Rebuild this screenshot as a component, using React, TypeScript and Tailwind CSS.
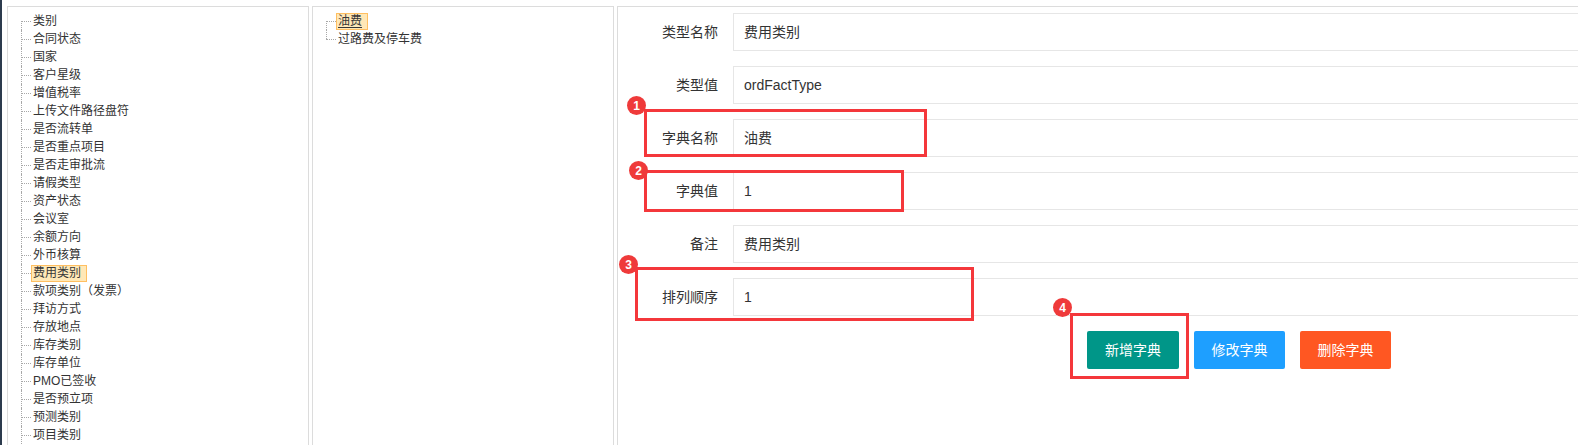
import React from 'react';

const typeList = [
  '类别', '合同状态', '国家', '客户星级', '增值税率', '上传文件路径盘符', '是否流转单', '是否重点项目',
  '是否走审批流', '请假类型', '资产状态', '会议室', '余额方向', '外币核算', '费用类别', '款项类别（发票）',
  '拜访方式', '存放地点', '库存类别', '库存单位', 'PMO已签收', '是否预立项', '预测类别', '项目类别',
];

const dictList = ['油费', '过路费及停车费'];

const fields = [
  { label: '类型名称', value: '费用类别' },
  { label: '类型值', value: 'ordFactType' },
  { label: '字典名称', value: '油费' },
  { label: '字典值', value: '1' },
  { label: '备注', value: '费用类别' },
  { label: '排列顺序', value: '1' },
];

const font = { fontFamily: '"Liberation Sans", "Noto Sans CJK SC", sans-serif' };

function TreeRow({ text, first, last, selected, underline }: { text: string; first: boolean; last: boolean; selected: boolean; underline?: boolean }) {
  return (
    <li className="relative flex h-[18px] items-center pl-[13px]">
      <span
        className={
          'absolute left-[13px] w-0 border-l border-dotted border-[#a8a8a8] ' +
          (first ? 'top-[9px] ' : 'top-0 ') +
          (last ? 'h-[9px]' : 'bottom-0')
        }
      />
      <span className="w-[10px] border-t border-dotted border-[#a8a8a8]" />
      <span
        className={
          'flex h-[17px] items-center border pl-[1px] pr-[5px] whitespace-nowrap leading-[17px] ' +
          (selected ? 'border-[#FFB951] bg-[#FFE6B0] opacity-90 text-[#222]' : 'border-transparent text-[#333]') +
          (underline ? ' underline underline-offset-2' : '')
        }
      >
        {text}
      </span>
    </li>
  );
}

function Badge({ n, className }: { n: number; className: string }) {
  return (
    <div className={'absolute flex h-[19px] w-[19px] items-center justify-center rounded-full bg-[#ef3a3a] text-[12px] font-bold text-white ' + className}>
      {n}
    </div>
  );
}

export default function App() {
  return (
    <div className="relative flex h-[445px] w-[1578px] overflow-hidden bg-white text-[12px]" style={font}>
      <div className="h-full w-[2px] shrink-0 bg-[#2c3b4d]" />

      <div className="ml-[5px] flex pt-[6px]">
        <div className="h-[460px] w-[302px] shrink-0 border border-[#dcdcdc]">
          <ul className="pt-[5px]">
            {typeList.map((t, i) => (
              <TreeRow key={t} text={t} first={i === 0} last={false} selected={t === '费用类别'} />
            ))}
          </ul>
        </div>

        <div className="ml-[3px] h-[460px] w-[302px] shrink-0 border border-[#dcdcdc]">
          <ul className="pt-[5px]">
            {dictList.map((t, i) => (
              <TreeRow key={t} text={t} first={i === 0} last={i === dictList.length - 1} selected={i === 0} underline={i === 0} />
            ))}
          </ul>
        </div>

        <div className="ml-[3px] h-[460px] w-[1100px] shrink-0 border border-[#dcdcdc] pl-[5px] pt-[6px] text-[14px] text-[#333]">
          {fields.map((f) => (
            <div key={f.label} className="mb-[15px] flex h-[38px]">
              <label className="w-[110px] shrink-0 pr-[15px] text-right leading-[38px]">{f.label}</label>
              <div className="flex flex-1 items-center border border-[#e6e6e6] pl-[10px]">{f.value}</div>
            </div>
          ))}
          <div className="flex gap-[15px] pl-[464px]">
            <button className="h-[38px] w-[92px] rounded-[2px] bg-[#009688] text-white">新增字典</button>
            <button className="h-[38px] w-[91px] rounded-[2px] bg-[#1E9FFF] text-white">修改字典</button>
            <button className="h-[38px] w-[91px] rounded-[2px] bg-[#FF5722] text-white">删除字典</button>
          </div>
        </div>
      </div>

      <div className="absolute left-[644px] top-[109px] h-[48px] w-[283px] border-[3px] border-[#f4373b]" />
      <div className="absolute left-[644px] top-[170px] h-[42px] w-[260px] border-[3px] border-[#f4373b]" />
      <div className="absolute left-[635px] top-[267px] h-[54px] w-[339px] border-[3px] border-[#f4373b]" />
      <div className="absolute left-[1070px] top-[313px] h-[66px] w-[119px] border-[3px] border-[#f4373b]" />

      <Badge n={1} className="left-[627px] top-[96px]" />
      <Badge n={2} className="left-[629px] top-[161px]" />
      <Badge n={3} className="left-[619px] top-[255px]" />
      <Badge n={4} className="left-[1053px] top-[298px]" />
    </div>
  );
}
